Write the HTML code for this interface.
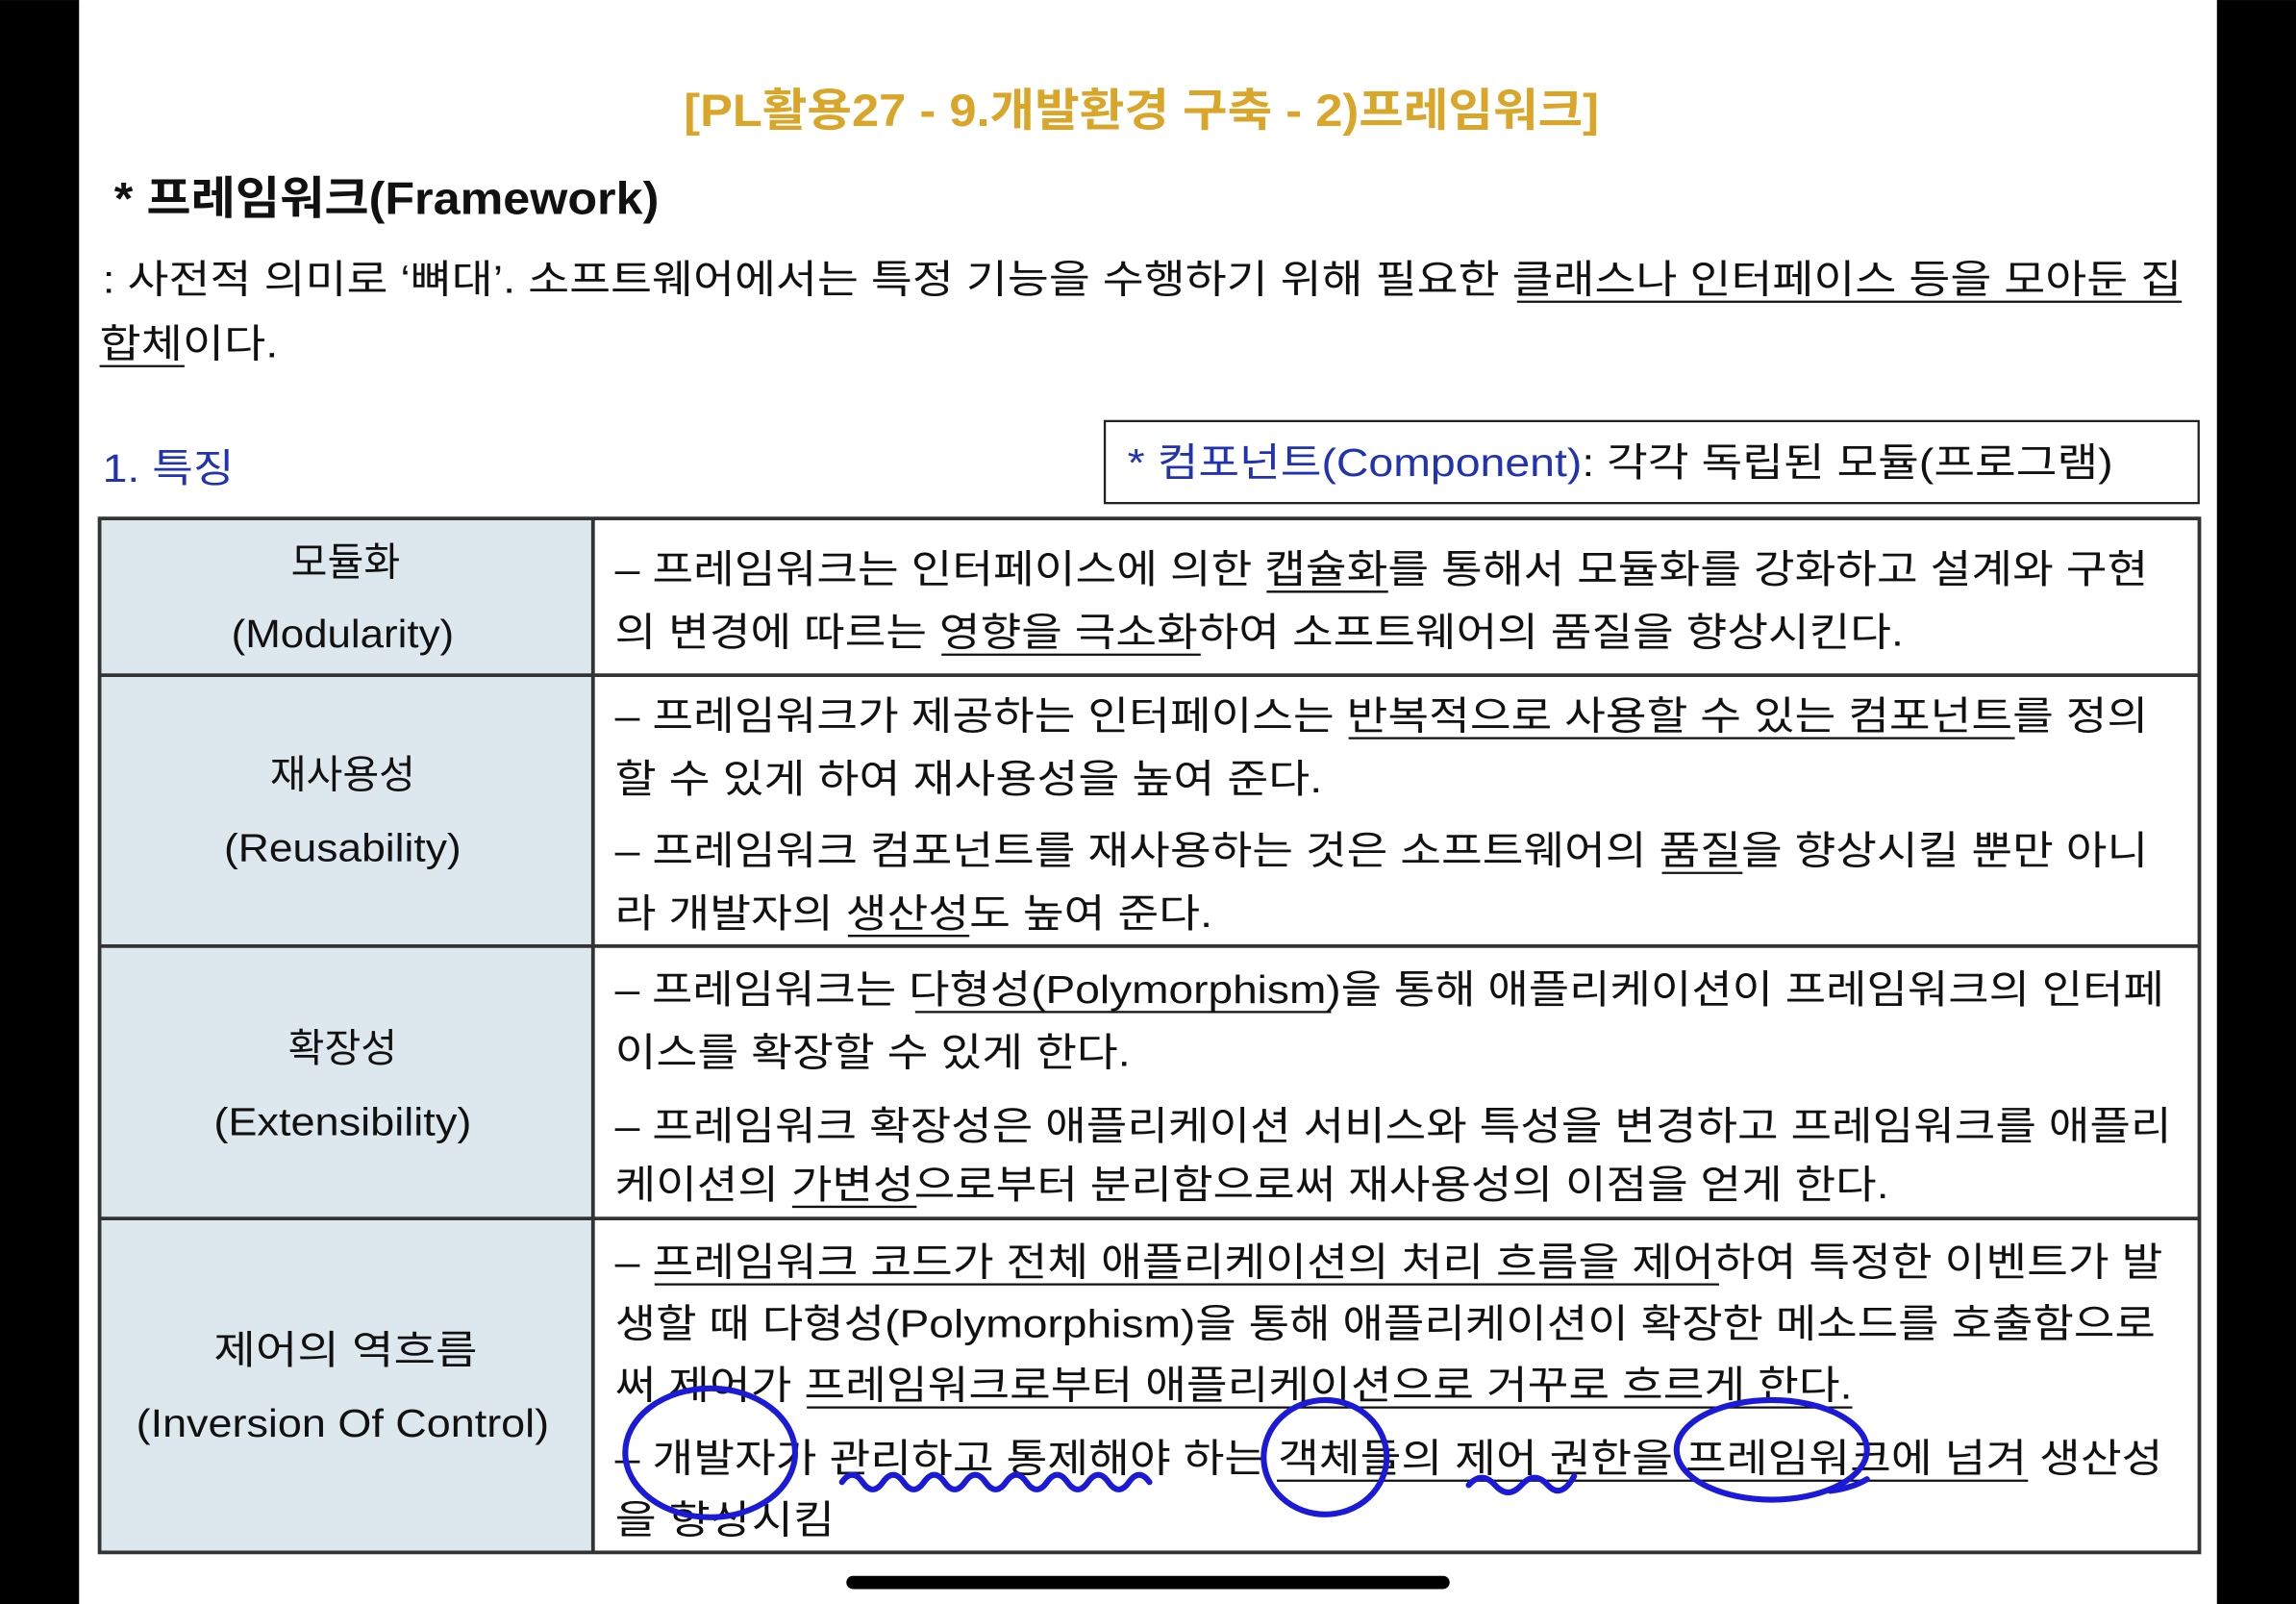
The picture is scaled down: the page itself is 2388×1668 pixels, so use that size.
<!DOCTYPE html>
<html><head><meta charset="utf-8"><style>
html,body{margin:0;padding:0;background:#fff;}
svg{display:block}
text{font-family:"Liberation Sans","Noto Sans CJK KR",sans-serif;}
</style></head><body>
<svg width="2388" height="1668" viewBox="0 0 1568 1095.2" xmlns="http://www.w3.org/2000/svg">
<rect x="0" y="0" width="1568" height="1096" fill="#fff"/>
<rect x="0" y="0" width="54" height="1096" fill="#000"/>
<rect x="1514" y="0" width="54" height="1096" fill="#000"/>

<text x="467" y="86" font-size="31" fill="#d9a62a" font-weight="bold" textLength="625" lengthAdjust="spacingAndGlyphs">[PL활용27 - 9.개발환경 구축 - 2)프레임워크]</text>
<text x="78" y="146" font-size="31" fill="#111" font-weight="bold" textLength="372" lengthAdjust="spacingAndGlyphs">* 프레임워크(Framework)</text>

<g font-size="27" fill="#111">
<text x="70" y="200" textLength="1420" lengthAdjust="spacingAndGlyphs">: 사전적 의미로 ‘뼈대’. 소프트웨어에서는 특정 기능을 수행하기 위해 필요한 클래스나 인터페이스 등을 모아둔 집</text>
<text x="68" y="244" textLength="122" lengthAdjust="spacingAndGlyphs">합체이다.</text>
<text x="70" y="329" fill="#2233b0" textLength="90" lengthAdjust="spacingAndGlyphs">1. 특징</text>
</g>
<g stroke="#111" stroke-width="1.5">
<line x1="1036" y1="206" x2="1490" y2="206"/>
<line x1="68" y1="250" x2="126" y2="250"/>
</g>

<rect x="754.5" y="287.5" width="747" height="56" fill="none" stroke="#222" stroke-width="1.5"/>
<text x="770" y="325" font-size="27" textLength="673" lengthAdjust="spacingAndGlyphs"><tspan fill="#2233b0">* 컴포넌트(Component)</tspan><tspan fill="#111">: 각각 독립된 모듈(프로그램)</tspan></text>

<rect x="68" y="354" width="337" height="706" fill="#dde8ee"/>
<g stroke="#333" stroke-width="2.5" fill="none">
<rect x="68" y="354" width="1434" height="706"/>
<line x1="405" y1="354" x2="405" y2="1060"/>
<line x1="68" y1="461" x2="1502" y2="461"/>
<line x1="68" y1="646" x2="1502" y2="646"/>
<line x1="68" y1="832" x2="1502" y2="832"/>
</g>

<g font-size="27" fill="#111" text-anchor="middle">
<text x="236" y="393">모듈화</text>
<text x="234" y="442" textLength="152" lengthAdjust="spacingAndGlyphs">(Modularity)</text>
<text x="234" y="538">재사용성</text>
<text x="234" y="588" textLength="162" lengthAdjust="spacingAndGlyphs">(Reusability)</text>
<text x="234" y="725">확장성</text>
<text x="234" y="775" textLength="176" lengthAdjust="spacingAndGlyphs">(Extensibility)</text>
<text x="236" y="931" textLength="180" lengthAdjust="spacingAndGlyphs">제어의 역흐름</text>
<text x="234" y="981" textLength="282" lengthAdjust="spacingAndGlyphs">(Inversion Of Control)</text>
</g>

<g font-size="27" fill="#111">
<text x="420" y="398" textLength="1047" lengthAdjust="spacingAndGlyphs">– 프레임워크는 인터페이스에 의한 캡슐화를 통해서 모듈화를 강화하고 설계와 구현</text>
<text x="420" y="441" textLength="880" lengthAdjust="spacingAndGlyphs">의 변경에 따르는 영향을 극소화하여 소프트웨어의 품질을 향상시킨다.</text>
<text x="420" y="498" textLength="1047" lengthAdjust="spacingAndGlyphs">– 프레임워크가 제공하는 인터페이스는 반복적으로 사용할 수 있는 컴포넌트를 정의</text>
<text x="420" y="541" textLength="483" lengthAdjust="spacingAndGlyphs">할 수 있게 하여 재사용성을 높여 준다.</text>
<text x="420" y="590" textLength="1047" lengthAdjust="spacingAndGlyphs">– 프레임워크 컴포넌트를 재사용하는 것은 소프트웨어의 품질을 향상시킬 뿐만 아니</text>
<text x="420" y="633" textLength="408" lengthAdjust="spacingAndGlyphs">라 개발자의 생산성도 높여 준다.</text>
<text x="420" y="685" textLength="1058" lengthAdjust="spacingAndGlyphs">– 프레임워크는 다형성(Polymorphism)을 통해 애플리케이션이 프레임워크의 인터페</text>
<text x="420" y="728" textLength="352" lengthAdjust="spacingAndGlyphs">이스를 확장할 수 있게 한다.</text>
<text x="420" y="778" textLength="1063" lengthAdjust="spacingAndGlyphs">– 프레임워크 확장성은 애플리케이션 서비스와 특성을 변경하고 프레임워크를 애플리</text>
<text x="420" y="818" textLength="870" lengthAdjust="spacingAndGlyphs">케이션의 가변성으로부터 분리함으로써 재사용성의 이점을 얻게 한다.</text>
<text x="420" y="871" textLength="1057" lengthAdjust="spacingAndGlyphs">– 프레임워크 코드가 전체 애플리케이션의 처리 흐름을 제어하여 특정한 이벤트가 발</text>
<text x="420" y="913" textLength="1052" lengthAdjust="spacingAndGlyphs">생할 때 다형성(Polymorphism)을 통해 애플리케이션이 확장한 메소드를 호출함으로</text>
<text x="420" y="955" textLength="845" lengthAdjust="spacingAndGlyphs">써 제어가 프레임워크로부터 애플리케이션으로 거꾸로 흐르게 한다.</text>
<text x="420" y="1005" textLength="1057" lengthAdjust="spacingAndGlyphs">– 개발자가 관리하고 통제해야 하는 객체들의 제어 권한을 프레임워크에 넘겨 생산성</text>
<text x="420" y="1047" textLength="150" lengthAdjust="spacingAndGlyphs">을 향상시킴</text>
</g>
<g stroke="#111" stroke-width="1.5">
<line x1="865" y1="404" x2="948" y2="404"/>
<line x1="643" y1="447" x2="820" y2="447"/>
<line x1="921" y1="504" x2="1376" y2="504"/>
<line x1="1135" y1="596" x2="1190" y2="596"/>
<line x1="579" y1="639" x2="662" y2="639"/>
<line x1="625" y1="691" x2="909" y2="691"/>
<line x1="541" y1="824" x2="626" y2="824"/>
<line x1="447" y1="877" x2="1174" y2="877"/>
<line x1="551" y1="961" x2="1265" y2="961"/>
<line x1="872" y1="1011" x2="1385" y2="1011"/>
</g>

<g stroke="#1a1ad8" stroke-width="4" fill="none" stroke-linecap="round">
<ellipse cx="485" cy="992" rx="58" ry="44"/>
<ellipse cx="905" cy="995" rx="42" ry="39"/>
<ellipse cx="1210" cy="990" rx="65" ry="34"/>
<path d="M575 1012 q7 -10 14 0 t14 0 t14 0 t14 0 t14 0 t14 0 t14 0 t14 0 t14 0 t14 0 t14 0 t14 0 t14 0 t14 0 t14 0"/>
<path d="M1003 1014 q9 -10 18 0 t18 0 t18 0 t18 -6"/>
<path d="M1275 1010 q-10 6 -25 8"/>
</g>

<rect x="578" y="1076" width="412" height="9" rx="4.5" fill="#000"/>
</svg>
</body></html>
